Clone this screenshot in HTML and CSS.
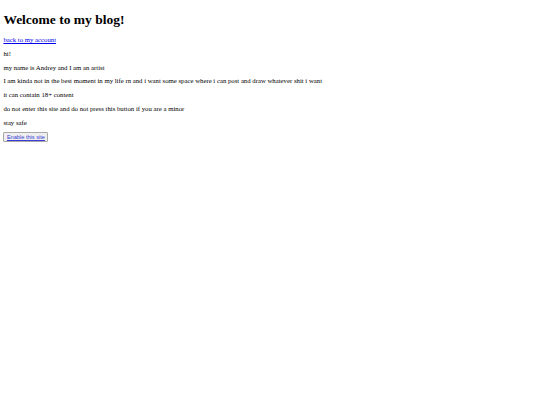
FILE: index.html
```html
<!DOCTYPE html>
<html>
<head>
<meta charset="utf-8">
<title>Welcome to my blog!</title>
<link rel="stylesheet" href="styles.css">
</head>
<body class="page">
<h1 class="title">Welcome to my blog!</h1>
<a class="link" href="#">back to my account</a>
<p class="text">hi!</p>
<p class="text">my name is Andrey and I am an artist</p>
<p class="text">I am kinda not in the best moment in my life rn and i want some space where i can post and draw whatever shit i want</p>
<p class="text">it can contain 18+ content</p>
<p class="text">do not enter this site and do not press this button if you are a minor</p>
<p class="text">stay safe</p>
<button class="btn"><a class="btn-link" href="#">Enable this site</a></button>
</body>
</html>
```
FILE: styles.css
```css
html {
  background: #ffffff;
}
.page {
  margin: 3.375px;
  font-family: "Liberation Serif", "Times New Roman", serif;
  font-size: 6.75px;
  color: #000000;
}
.title {
  font-size: 13.5px;
  font-weight: bold;
  margin: 8.4px 0 8.3px;
}
.link {
  color: #0000ee;
  text-decoration: underline;
}
.text {
  margin: 6.75px 0;
}
.btn {
  font-family: "Liberation Sans", Arial, sans-serif;
  font-size: 5.625px;
  padding: 0.6px 2.5px;
  border: 0.8px solid #a8a8a8;
  border-radius: 1px;
  background: #efefef;
  margin: 0;
  line-height: normal;
}
.btn-link {
  color: #3b3bd6;
  text-decoration: underline;
  text-decoration-thickness: 0.4px;
}
```
